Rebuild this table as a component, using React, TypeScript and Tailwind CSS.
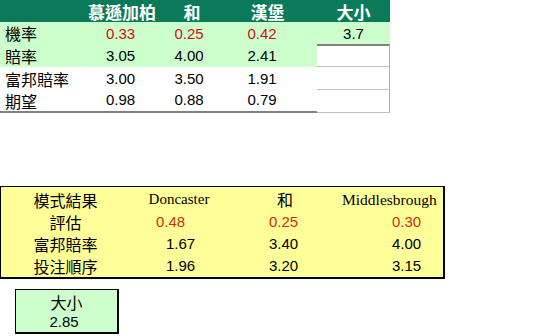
import React from "react";

const CJK = "font-['Noto_Sans_CJK_TC',sans-serif]";
const NUM = "font-['Liberation_Sans',Arial,sans-serif]";
const SERIF = "font-['Liberation_Serif','Times_New_Roman',serif]";

export default function App() {
  return (
    <div className="w-[534px] h-[336px] bg-white overflow-hidden text-black">
      {/* Top table */}
      <div className="grid grid-cols-[86px_72px_64px_95px_73px] grid-rows-[22px_22px_23px_23px_23px] w-[390px]">
        {/* header */}
        <div className="bg-[#0a7a5b]" />
        <div className="bg-[#0a7a5b] flex items-center justify-center text-white font-bold text-[17px] leading-none font-['Noto_Sans_CJK_TC',sans-serif]">慕遜加柏</div>
        <div className="bg-[#0a7a5b] flex items-center justify-center text-white font-bold text-[17px] leading-none pl-[4px] font-['Noto_Sans_CJK_TC',sans-serif]">和</div>
        <div className="bg-[#0a7a5b] flex items-center justify-center text-white font-bold text-[17px] leading-none pr-[4px] font-['Noto_Sans_CJK_TC',sans-serif]">漢堡</div>
        <div className="bg-[#0a7a5b] flex items-center justify-center text-white font-bold text-[17px] leading-none font-['Noto_Sans_CJK_TC',sans-serif]">大小</div>

        {/* row 1 */}
        <div className="bg-[#ccffcc] flex items-center pl-[5px] text-[16px] leading-none font-['Noto_Sans_CJK_TC',sans-serif]">機率</div>
        <div className="bg-[#ccffcc] flex items-center justify-center pr-[3px] pt-[2px] text-[15px] text-[#cc1111] font-['Liberation_Sans',Arial,sans-serif]">0.33</div>
        <div className="bg-[#ccffcc] flex items-center justify-center pr-[2px] pt-[2px] text-[15px] text-[#cc1111] font-['Liberation_Sans',Arial,sans-serif]">0.25</div>
        <div className="bg-[#ccffcc] flex items-center justify-center pr-[15px] pt-[2px] text-[15px] text-[#cc1111] font-['Liberation_Sans',Arial,sans-serif]">0.42</div>
        <div className="bg-[#ccffcc] flex items-center justify-center pt-[2px] text-[15px] font-['Liberation_Sans',Arial,sans-serif]">3.7</div>

        {/* row 2 */}
        <div className="bg-[#ccffcc] flex items-center pl-[5px] text-[16px] leading-none font-['Noto_Sans_CJK_TC',sans-serif]">賠率</div>
        <div className="bg-[#ccffcc] flex items-center justify-center pr-[3px] pt-[2px] text-[15px] font-['Liberation_Sans',Arial,sans-serif]">3.05</div>
        <div className="bg-[#ccffcc] flex items-center justify-center pr-[2px] pt-[2px] text-[15px] font-['Liberation_Sans',Arial,sans-serif]">4.00</div>
        <div className="bg-[#ccffcc] flex items-center justify-center pr-[15px] pt-[2px] text-[15px] font-['Liberation_Sans',Arial,sans-serif]">2.41</div>
        <div className="border-t-2 border-t-[#808080] border-b border-b-[#c0c0c0] border-r border-r-[#b0b0b0]" />

        {/* row 3 */}
        <div className="flex items-center pl-[5px] text-[16px] leading-none font-['Noto_Sans_CJK_TC',sans-serif]">富邦賠率</div>
        <div className="flex items-center justify-center pr-[3px] pt-[2px] text-[15px] font-['Liberation_Sans',Arial,sans-serif]">3.00</div>
        <div className="flex items-center justify-center pr-[2px] pt-[2px] text-[15px] font-['Liberation_Sans',Arial,sans-serif]">3.50</div>
        <div className="flex items-center justify-center pr-[15px] pt-[2px] text-[15px] font-['Liberation_Sans',Arial,sans-serif]">1.91</div>
        <div className="border-b border-b-[#c0c0c0] border-r border-r-[#b0b0b0]" />

        {/* row 4 */}
        <div className="flex items-center pl-[5px] text-[16px] leading-none border-b-2 border-[#808080] font-['Noto_Sans_CJK_TC',sans-serif]">期望</div>
        <div className="flex items-center justify-center pr-[3px] text-[15px] border-b-2 border-[#808080] font-['Liberation_Sans',Arial,sans-serif]">0.98</div>
        <div className="flex items-center justify-center pr-[2px] text-[15px] border-b-2 border-[#808080] font-['Liberation_Sans',Arial,sans-serif]">0.88</div>
        <div className="flex items-center justify-center pr-[15px] text-[15px] border-b-2 border-[#808080] font-['Liberation_Sans',Arial,sans-serif]">0.79</div>
        <div className="border-b border-b-[#c0c0c0] border-r border-r-[#b0b0b0]" />
      </div>

      {/* Yellow box */}
      <div className="mt-[73px] w-[445px] h-[93px] bg-[#ffff99] border-t border-l border-r-2 border-b-2 border-black">
        <div className="grid grid-cols-[129px_98px_114px_101px] grid-rows-[23px_22px_22px_22px] pt-[1px]">
          <div className="flex items-center justify-center text-[16px] leading-none font-['Noto_Sans_CJK_TC',sans-serif]">模式結果</div>
          <div className="flex items-center justify-center text-[15px] leading-none font-['Liberation_Serif','Times_New_Roman',serif]">Doncaster</div>
          <div className="flex items-center justify-center text-[16px] leading-none pb-[2px] font-['Noto_Sans_CJK_TC',sans-serif]">和</div>
          <div className="flex items-center text-[15.5px] leading-none font-['Liberation_Serif','Times_New_Roman',serif]"><span className="w-[92px] text-center">Middlesbrough</span></div>

          <div className="flex items-center justify-center text-[16px] leading-none font-['Noto_Sans_CJK_TC',sans-serif]">評估</div>
          <div className="flex items-center pl-[26px] text-[15px] text-[#cc3300] font-['Liberation_Sans',Arial,sans-serif]">0.48</div>
          <div className="flex items-center pl-[41px] text-[15px] text-[#cc3300] font-['Liberation_Sans',Arial,sans-serif]">0.25</div>
          <div className="flex items-center pl-[50px] text-[15px] text-[#cc3300] font-['Liberation_Sans',Arial,sans-serif]">0.30</div>

          <div className="flex items-center justify-center text-[16px] leading-none font-['Noto_Sans_CJK_TC',sans-serif]">富邦賠率</div>
          <div className="flex items-center pl-[36px] text-[15px] font-['Liberation_Sans',Arial,sans-serif]">1.67</div>
          <div className="flex items-center pl-[41px] text-[15px] font-['Liberation_Sans',Arial,sans-serif]">3.40</div>
          <div className="flex items-center pl-[50px] text-[15px] font-['Liberation_Sans',Arial,sans-serif]">4.00</div>

          <div className="flex items-center justify-center text-[16px] leading-none font-['Noto_Sans_CJK_TC',sans-serif]">投注順序</div>
          <div className="flex items-center pl-[36px] text-[15px] font-['Liberation_Sans',Arial,sans-serif]">1.96</div>
          <div className="flex items-center pl-[41px] text-[15px] font-['Liberation_Sans',Arial,sans-serif]">3.20</div>
          <div className="flex items-center pl-[50px] text-[15px] font-['Liberation_Sans',Arial,sans-serif]">3.15</div>
        </div>
      </div>

      {/* Green box */}
      <div className="ml-[15px] mt-[10px] w-[104px] h-[45px] bg-[#ccffcc] border-t border-l border-r-2 border-b-2 border-black flex flex-col items-center">
        <div className="h-[22px] flex items-center text-[16px] leading-none pt-[2px] font-['Noto_Sans_CJK_TC',sans-serif]">大小</div>
        <div className="h-[20px] flex items-center text-[15px] pr-[5px] font-['Liberation_Sans',Arial,sans-serif]">2.85</div>
      </div>
    </div>
  );
}
